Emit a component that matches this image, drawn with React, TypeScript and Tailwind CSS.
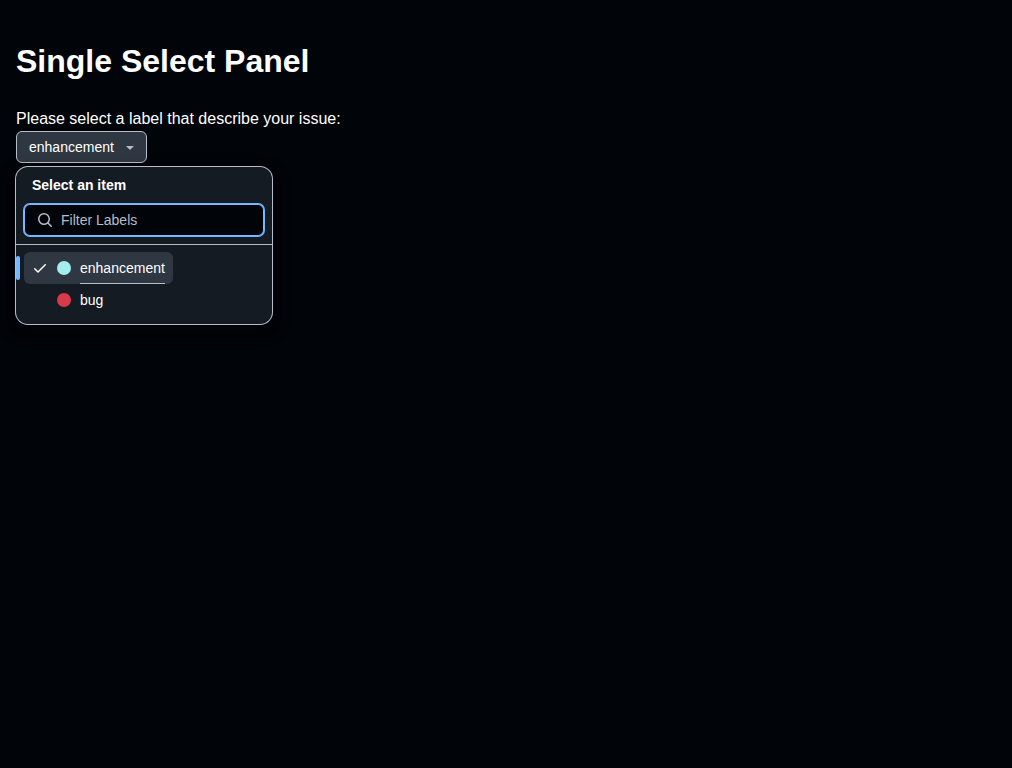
import { useState } from 'react';

type Label = { name: string; dot: string };

const labels: Label[] = [
  { name: 'enhancement', dot: 'bg-[#a2eeef]' },
  { name: 'bug', dot: 'bg-[#d73a4a]' },
];

function TriangleDownIcon() {
  return (
    <svg aria-hidden="true" viewBox="0 0 16 16" className="size-4 fill-[#b7bdc8]">
      <path d="m4.427 7.427 3.396 3.396a.25.25 0 0 0 .354 0l3.396-3.396A.25.25 0 0 0 11.396 7H4.604a.25.25 0 0 0-.177.427Z" />
    </svg>
  );
}

function SearchIcon() {
  return (
    <svg aria-hidden="true" viewBox="0 0 16 16" className="size-4 shrink-0 fill-[#b7bdc8]">
      <path d="M10.68 11.74a6 6 0 0 1-7.922-8.982 6 6 0 0 1 8.982 7.922l3.04 3.04a.749.749 0 0 1-.326 1.275.749.749 0 0 1-.734-.215ZM11.5 7a4.499 4.499 0 1 0-8.997 0A4.499 4.499 0 0 0 11.5 7Z" />
    </svg>
  );
}

function CheckIcon() {
  return (
    <svg aria-hidden="true" viewBox="0 0 16 16" className="size-4 fill-white">
      <path d="M13.78 4.22a.75.75 0 0 1 0 1.06l-7.25 7.25a.75.75 0 0 1-1.06 0L2.22 9.28a.751.751 0 0 1 .018-1.042.751.751 0 0 1 1.042-.018L6 10.94l6.72-6.72a.75.75 0 0 1 1.06 0Z" />
    </svg>
  );
}

export default function App() {
  const [selected, setSelected] = useState('enhancement');
  const [filter, setFilter] = useState('');
  const visible = labels.filter((l) => l.name.includes(filter.toLowerCase()));

  return (
    <main className="min-h-screen bg-[#010409] px-4 pt-9 font-['Liberation_Sans',Arial,sans-serif] text-base text-white">
      <h1 className="mb-[21px] text-[32px] leading-[50px] font-bold">Single Select Panel</h1>
      <p id="prompt">Please select a label that describe your issue:</p>
      <div className="relative w-fit">
        <button
          type="button"
          aria-haspopup="true"
          aria-expanded="true"
          aria-describedby="prompt"
          className="flex h-8 items-center gap-2 rounded-md border border-[#b7bdc8] bg-[#2f3742] pr-2 pl-3 text-sm"
        >
          {selected}
          <TriangleDownIcon />
        </button>
        <div className="absolute top-full left-0 mt-1 w-64 rounded-xl bg-[#151b23] text-sm shadow-[0_0_0_1px_#b7bdc8,0_6px_12px_-3px_#01040966,0_6px_18px_0_#01040966]">
          <div className="border-b border-[#b7bdc8] px-2 pt-2 pb-2">
            <h2 className="mb-[9px] px-2 font-bold">Select an item</h2>
            <label className="flex h-8 items-center gap-2 rounded-md border border-[#74b9ff] bg-[#010409] px-3 ring-1 ring-[#74b9ff]">
              <SearchIcon />
              <input
                type="text"
                aria-label="Filter Labels"
                placeholder="Filter Labels"
                value={filter}
                onChange={(e) => setFilter(e.target.value)}
                className="w-full min-w-0 bg-transparent outline-none placeholder:text-[#b7bdc8]"
              />
            </label>
          </div>
          <ul role="listbox" aria-label="Labels" className="flex flex-col items-start px-2 pt-[7px] pb-2">
            {visible.map((label) => {
              const active = label.name === selected;
              return (
                <li key={label.name} role="option" aria-selected={active} className="relative">
                  {active && <span className="absolute top-1 -left-2 h-6 w-1 rounded-md bg-[#74b9ff]" />}
                  <button
                    type="button"
                    onClick={() => setSelected(label.name)}
                    className={
                      active
                        ? 'flex h-8 items-center gap-2 rounded-md bg-[#2f3742] px-2'
                        : 'flex h-8 items-center gap-2 rounded-md px-2'
                    }
                  >
                    <span className="size-4">{active && <CheckIcon />}</span>
                    <span className="flex size-4 items-center justify-center">
                      <span className={`size-3.5 rounded-full ${label.dot}`} />
                    </span>
                    <span
                      className={
                        active
                          ? 'flex h-8 items-center border-b border-[#b7bdc8] pt-px'
                          : 'flex h-8 items-center'
                      }
                    >
                      {label.name}
                    </span>
                  </button>
                </li>
              );
            })}
          </ul>
        </div>
      </div>
    </main>
  );
}
